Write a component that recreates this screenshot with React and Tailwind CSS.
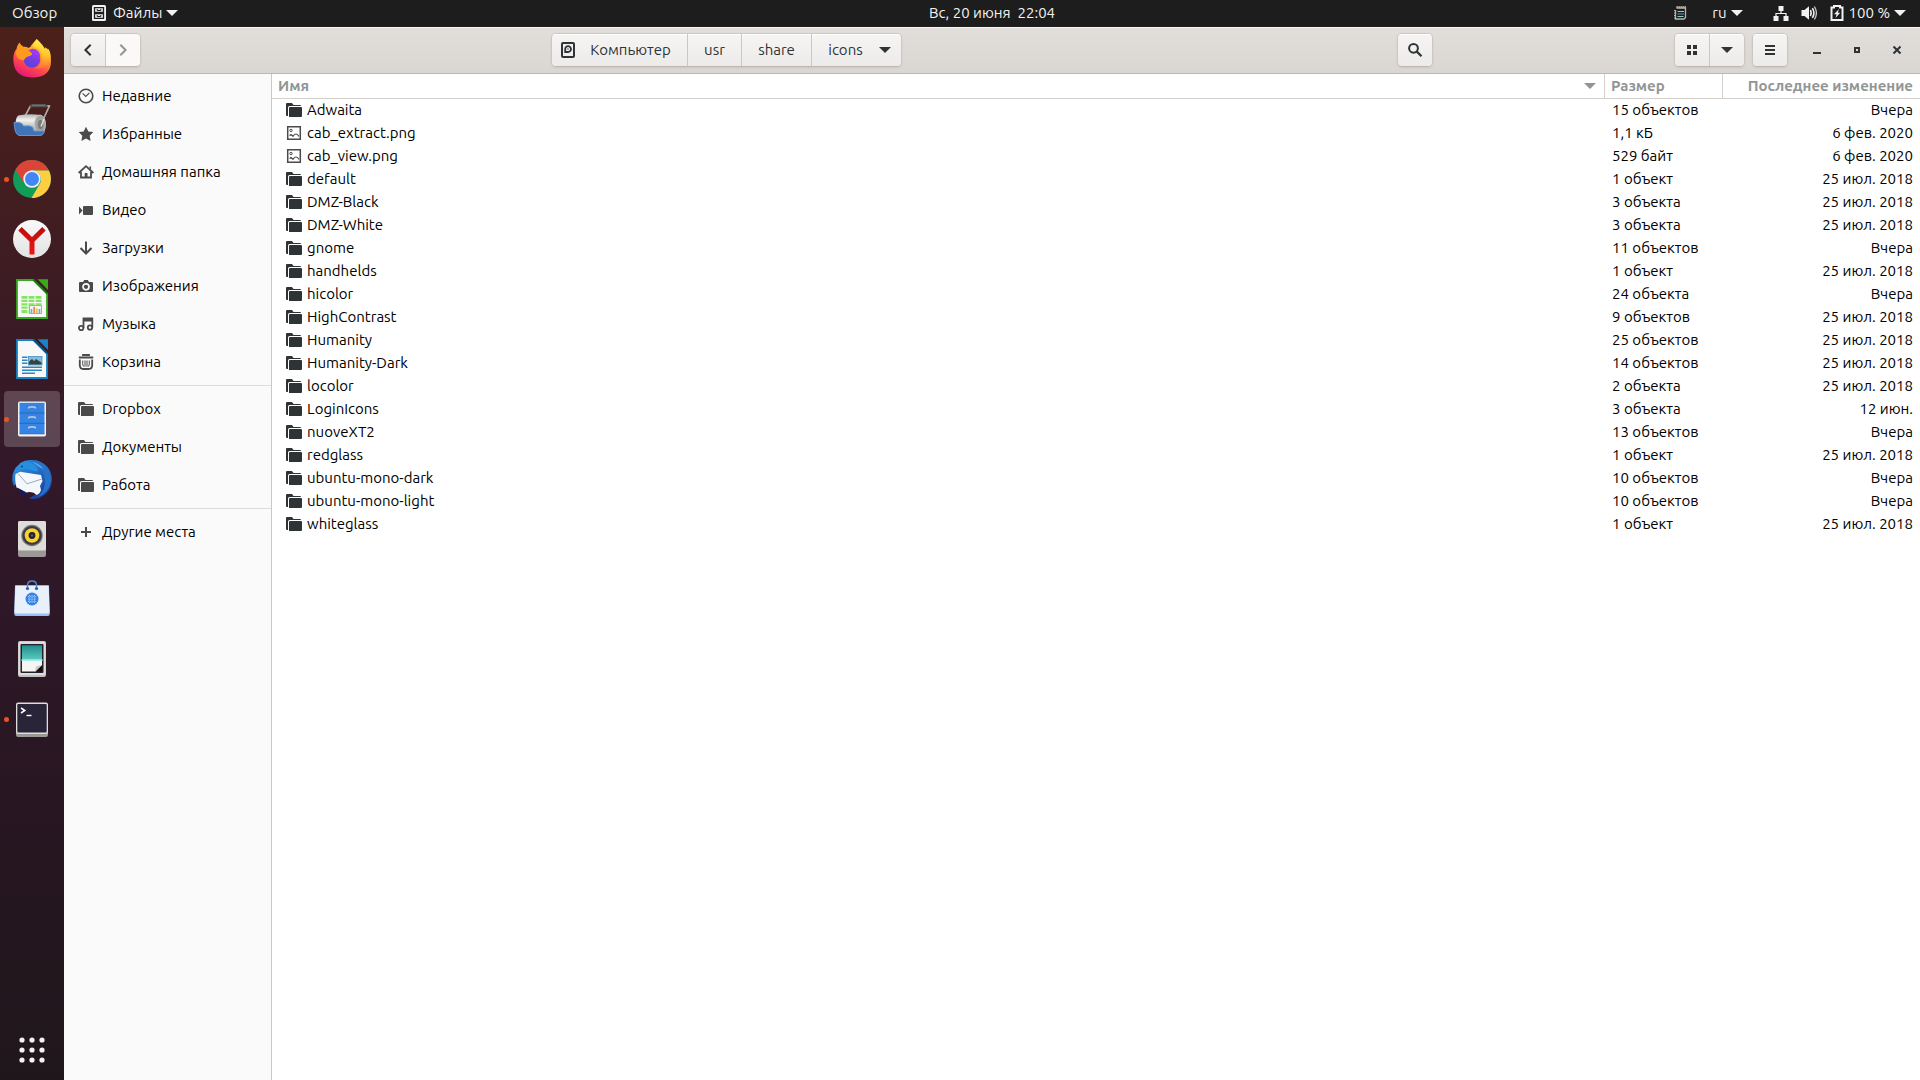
import React, { useState } from 'react';

const places = [
  [
    { label: 'Недавние', icon: 'recent' },
    { label: 'Избранные', icon: 'star' },
    { label: 'Домашняя папка', icon: 'home' },
    { label: 'Видео', icon: 'video' },
    { label: 'Загрузки', icon: 'download' },
    { label: 'Изображения', icon: 'camera' },
    { label: 'Музыка', icon: 'music' },
    { label: 'Корзина', icon: 'trash' },
  ],
  [
    { label: 'Dropbox', icon: 'folder' },
    { label: 'Документы', icon: 'folder' },
    { label: 'Работа', icon: 'folder' },
  ],
  [{ label: 'Другие места', icon: 'plus' }],
];

const files = [
  ['Adwaita', '15 объектов', 'Вчера'],
  ['cab_extract.png', '1,1 кБ', '6 фев. 2020'],
  ['cab_view.png', '529 байт', '6 фев. 2020'],
  ['default', '1 объект', '25 июл. 2018'],
  ['DMZ-Black', '3 объекта', '25 июл. 2018'],
  ['DMZ-White', '3 объекта', '25 июл. 2018'],
  ['gnome', '11 объектов', 'Вчера'],
  ['handhelds', '1 объект', '25 июл. 2018'],
  ['hicolor', '24 объекта', 'Вчера'],
  ['HighContrast', '9 объектов', '25 июл. 2018'],
  ['Humanity', '25 объектов', '25 июл. 2018'],
  ['Humanity-Dark', '14 объектов', '25 июл. 2018'],
  ['locolor', '2 объекта', '25 июл. 2018'],
  ['LoginIcons', '3 объекта', '12 июн.'],
  ['nuoveXT2', '13 объектов', 'Вчера'],
  ['redglass', '1 объект', '25 июл. 2018'],
  ['ubuntu-mono-dark', '10 объектов', 'Вчера'],
  ['ubuntu-mono-light', '10 объектов', 'Вчера'],
  ['whiteglass', '1 объект', '25 июл. 2018'],
];

// 16px symbolic icons
const glyphs = {
  recent: (
    <g fill="none" stroke="currentColor" strokeWidth="1.6">
      <circle cx="8" cy="8" r="6.8" />
      <path d="M4.6 5.4 7.8 8.4 11.4 4.8" strokeWidth="1.2" />
    </g>
  ),
  star: <path d="M8 .8 10.3 5.4 15.3 6.1 11.7 9.7 12.6 15 8 12.5 3.4 15 4.3 9.7.7 6.1 5.7 5.4Z" fill="currentColor" />,
  home: (
    <g>
      <path d="M.6 9 8 2.2 15.4 9M3 8v5.5h10V8" fill="none" stroke="currentColor" strokeWidth="1.8" />
      <path d="M6.7 14V9h2.8v5M11.5 2.5h1.6v3l-1.6-1.4z" fill="currentColor" />
    </g>
  ),
  video: (
    <g fill="currentColor">
      <rect x="5" y="4" width="10" height="9" rx="1" />
      <path d="M1 4.5 4.6 8.5 1 12.5Z" />
    </g>
  ),
  download: <path d="M8 1.5v12M2.5 8 8 13.5 13.5 8" fill="none" stroke="currentColor" strokeWidth="2" />,
  camera: (
    <g>
      <path d="M2 4h3l1.2-2h3.6L11 4h3a1 1 0 0 1 1 1v8a1 1 0 0 1-1 1H2a1 1 0 0 1-1-1V5a1 1 0 0 1 1-1Z" fill="currentColor" />
      <circle cx="8" cy="8.8" r="3" fill="none" stroke="#fafafa" strokeWidth="1.7" />
    </g>
  ),
  music: (
    <g fill="none" stroke="currentColor" strokeWidth="1.8">
      <circle cx="3.2" cy="12" r="2.2" />
      <circle cx="12" cy="11.5" r="2.2" />
      <path d="M5.5 12V2.5H14.3V11.5M5.5 4.5H14" />
    </g>
  ),
  trash: (
    <g fill="none" stroke="currentColor">
      <path d="M5 2V1h6v1M.8 3.5h14.4" strokeWidth="1.8" />
      <path d="M1.8 5.5v5.5q0 4 3.5 4h5.4q3.5 0 3.5-4V5.5" strokeWidth="1.8" />
      <path d="M4.8 6.5q-.6 3.5 .6 6M7 6.5v6.2M9 6.5v6.2M11.2 6.5q.6 3.5-.6 6" strokeWidth="1" />
    </g>
  ),
  folder: (
    <path
      d="M1 1h5l1.5 2H14q1 0 1 1H3.5Q2 4 2 5.5V14H1q-1 0-1-1V2q0-1 1-1ZM4 5h11q1 0 1 1v8q0 1-1 1H3V6q0-1 1-1Z"
      fill="currentColor"
    />
  ),
  image: (
    <g fill="none" stroke="currentColor">
      <path d="M1.7 1.7h12.6v12.6H1.7Z" strokeWidth="1.5" />
      <circle cx="5" cy="5.5" r="1.2" strokeWidth="1" />
      <path d="M3.5 10.5 5 9.5 7 11.3Q8.5 8.8 10 9T13 11.3" strokeWidth="1.2" />
    </g>
  ),
  plus: <path d="M8 3v10M3 8h10" stroke="currentColor" strokeWidth="2" fill="none" />,
  disk: (
    <g fill="none" stroke="currentColor">
      <rect x="2" y="1" width="12" height="14" rx="1" strokeWidth="2" />
      <path d="M5.2 11V7.2A2.9 2.9 0 1 1 8 10H5.6" strokeWidth="1.8" />
      <circle cx="8" cy="7" r=".7" fill="currentColor" strokeWidth="0" />
    </g>
  ),
  back: <path d="M10.7 2.7 5.4 8l5.3 5.3" fill="none" stroke="currentColor" strokeWidth="2" />,
  forward: <path d="M5.3 2.7 10.6 8l-5.3 5.3" fill="none" stroke="currentColor" strokeWidth="2" />,
  search: (
    <g fill="none" stroke="currentColor" strokeWidth="2">
      <circle cx="6.5" cy="6.3" r="4.4" />
      <path d="M9.6 9.4 14.5 14.3" strokeWidth="2.2" />
    </g>
  ),
  grid: <path d="M3 3h4v4H3zM9 3h4v4H9zM3 9h4v4H3zM9 9h4v4H9z" fill="currentColor" />,
  menu: <path d="M3 3h10v2H3zM3 7h10v2H3zM3 11h10v2H3z" fill="currentColor" />,
  minimize: <path d="M4 10h8v2H4z" fill="currentColor" />,
  maximize: <path d="M6 6h4v4H6z" fill="none" stroke="currentColor" strokeWidth="2" />,
  close: <path d="m4.5 4.5 7 7m0-7-7 7" fill="none" stroke="currentColor" strokeWidth="2" />,
  cabinet: (
    <g>
      <rect x="1" y="0" width="14" height="16" rx="1.5" fill="#f2f2f2" />
      <path d="M3.5 2.7h9v4.6h-9zM3.5 8.7h9v4.6h-9z" fill="none" stroke="#1d1d1d" strokeWidth="1.3" />
      <path d="M6.2 4v1.5h3.6V4M6.2 10v1.5h3.6V10" fill="none" stroke="#1d1d1d" strokeWidth="1" />
    </g>
  ),
  notes: (
    <g fill="none">
      <path d="M4.5 3h9v9.5L12 14H3.5V5" stroke="#b9b6a9" strokeWidth="1.3" />
      <path d="M4.5 2h9.5" stroke="#b9b6a9" strokeWidth="1.8" strokeDasharray="1.3 .7" />
      <path d="M2 5.5h2M2 8h2M2 10.5h2M2 13h2" stroke="#b9b6a9" />
      <path d="M5.5 6.5h6.5M5.5 11.5h6" stroke="#8fc9d4" strokeWidth="1" />
      <path d="M5.5 9h6.5" stroke="#3f8fa8" strokeWidth="1.2" />
    </g>
  ),
  network: (
    <g fill="currentColor">
      <path d="M5.5 1h5v5h-5zM.5 11h5v5h-5zM10.5 11h5v5h-5z" />
      <path d="M8 6v2.5M3 11V8.5h10V11" fill="none" stroke="currentColor" strokeWidth="1.2" />
    </g>
  ),
  volume: (
    <g fill="none" stroke="currentColor">
      <path d="M.5 5h3L8 1.2v13.6L3.5 11h-3Z" fill="currentColor" strokeWidth="0" />
      <path d="M9.4 5q1.6 3 0 6M11.4 3.2q3 4.8 0 9.6" strokeWidth="1.6" />
      <path d="M13.4 1.5q4 6.5 0 13" strokeWidth="1.3" opacity=".8" />
    </g>
  ),
  battery: (
    <g>
      <path d="M5 2.5V1h6v1.5H13.5V15H2.5V2.5Z" fill="none" stroke="currentColor" strokeWidth="2" />
      <path d="M10 4 5 9.2h2.6L6.5 13l4.7-5.2H8.8Z" fill="currentColor" />
    </g>
  ),
};

const Icon = ({ name, className = '' }) => (
  <svg viewBox="0 0 16 16" className={`h-4 w-4 shrink-0 ${className}`} aria-hidden="true">
    {glyphs[name]}
  </svg>
);

const Arrow = ({ className = '' }) => (
  <svg viewBox="0 0 12 6" className={`h-[6px] w-3 shrink-0 ${className}`} aria-hidden="true">
    <path d="M0 0h12L6 6Z" fill="currentColor" />
  </svg>
);

const Firefox = () => (
  <g>
    <path
      d="M11.4 7.5Q12.8 10.5 15.5 11.8 18.5 11.5 20.5 13 23 12 23.5 10 25.5 7.5 28.8 4 31 6.5 32.5 9 34.5 10.5 36 13.5 37 14.5 37.5 12.3 40.5 14 42.2 18 43 22 43 26 43 42.5 24 42.5 5.3 42 5.3 24 5.5 17 8.5 14 9 10.5 11.4 7.5Z"
      fill="url(#ff-body)"
    />
    <path d="M28.8 4.3Q25 8.5 25.5 12 33 12 34 21 34.5 30 27 33.5 38 34 41.5 26 43.5 19 40.5 14L38 16Q35 9.5 28.8 4.3Z" fill="url(#ff-flame)" />
    <circle cx="24" cy="24.5" r="8.2" fill="url(#ff-globe)" />
    <path d="M11.5 9Q12.5 12 15.5 12.5 19 12 21 14.5L24 18.5Q24.5 20.5 20.5 21.3 17.5 22 16 25 9.5 25.5 8 19 8.5 13 11.5 9Z" fill="#ff9a1c" />
    <path d="M20.5 15.5Q25 12 30 16 33.5 20 31.5 25.5 30 20 26.5 19.5Z" fill="#9a3df0" />
  </g>
);

const Roller = () => (
  <g transform="translate(0 6)">
    <path d="M16.5 16 22.5 4.8H41.5L33.5 22" fill="none" stroke="#a9aba7" strokeWidth="1.7" strokeLinejoin="round" />
    <path d="M23.5 4.8H38" stroke="#525451" strokeWidth="3" strokeLinecap="round" />
    <path d="M24 4.2H37" stroke="#8b8d8a" strokeWidth=".8" />
    <path d="M10 14.5Q22 12.5 32 14V32Q20 34 8 30 6.5 18 10 14.5Z" fill="url(#roll)" />
    <ellipse cx="32" cy="23.5" rx="5.5" ry="9.5" fill="#a2a4a0" stroke="#d2d3d0" strokeWidth=".8" />
    <ellipse cx="32.5" cy="23.5" rx="2.6" ry="4.5" fill="#777a76" />
    <path d="M6 21.5Q10.5 20.5 14 22.5L15.5 25Q22 24.2 24.5 26L26 30H36.5Q36 33.5 33 34.5H11Q8 33.5 7 29Z" fill="#3f74b8" stroke="#6b9bd2" strokeWidth=".9" />
    <path d="M36 18 33 25.5" stroke="#e6e7e4" strokeWidth="1.3" />
  </g>
);

const Chrome = () => (
  <g>
    <circle cx="24" cy="24" r="19" fill="#109d58" />
    <path d="M7.5 14.5A19 19 0 0 1 40.9 15.5H24L16 28.5Z" fill="#db4437" />
    <path d="M40.9 15.5A19 19 0 0 1 23.5 43L32 28.6A9 9 0 0 0 24 15.5Z" fill="#ffcd40" />
    <circle cx="24" cy="24" r="8.7" fill="#f1f1f1" />
    <circle cx="24" cy="24" r="7" fill="#4285f4" />
  </g>
);

const Yandex = () => (
  <g>
    <circle cx="24" cy="24" r="19" fill="url(#silver)" />
    <path d="M12 13.8 24 25.5 36 13.8M24 25V39.5" fill="none" stroke="url(#ya)" strokeWidth="5" />
  </g>
);

const Sheet = ({ color, dark, children }) => (
  <g>
    <path d="M9 5H25.5L39 18.5V43H9Z" fill="#f8f8f8" stroke={color} strokeWidth="1.8" />
    <path d="M29.5 4.2H40V15Z" fill={color} />
    <path d="M25 4.5 39.5 19" stroke={dark} strokeWidth="1.5" />
    {children}
  </g>
);

const Calc = () => (
  <Sheet color="#37ab1c" dark="#18770a">
    <rect x="13.5" y="21" width="20" height="17" fill="#89e06a" />
    <path d="M13.5 24.3h20M13.5 27.6h20M13.5 31h20M13.5 34.4h20M20 21v17M27 21v17" stroke="#f4fff0" strokeWidth="1.1" />
    <rect x="21.5" y="30.5" width="12" height="8" fill="#f5f5f2" stroke="#a5a5a0" strokeWidth=".9" />
    <path d="M23.5 34v4M31.5 34v4" stroke="#57b6c5" strokeWidth="1.6" />
    <path d="M26.2 31.8v6.2" stroke="#ef8354" strokeWidth="1.8" />
    <path d="M28.9 33.5v4.5" stroke="#eabd3e" strokeWidth="1.6" />
  </Sheet>
);

const Writer = () => (
  <Sheet color="#1683c7" dark="#0b4f83">
    <path d="M14 22.3h5.5M14 25.3h5.5M14 28.3h5.5M14 32.3h20M14 35.3h20M14 38.3h13" stroke="#2a88c4" strokeWidth="1.4" />
    <rect x="20.5" y="21.5" width="13.5" height="8.5" fill="#83bce3" stroke="#3489bd" strokeWidth=".7" />
    <path d="M21 29.6V27Q24 21.8 26 26.3L28 24Q30.5 25.5 33.5 27.5V29.6Z" fill="#36443a" />
  </Sheet>
);

const Cabinet = () => (
  <g>
    <rect x="10" y="6.5" width="28" height="35" rx="1.8" fill="#f3f2f1" />
    <path d="M11.5 7.8h25v31h-25Z" fill="#3584e4" />
    <path d="M11.5 18h25M11.5 28.3h25M11.5 38.8h25" stroke="#1f66bd" strokeWidth=".9" />
    <path
      d="M20.5 13.5q0-1.5 1.5-1.5h4q1.5 0 1.5 1.5M20.5 23.5q0-1.5 1.5-1.5h4q1.5 0 1.5 1.5M20.5 33.5q0-1.5 1.5-1.5h4q1.5 0 1.5 1.5"
      fill="none"
      stroke="#c9cfd6"
      strokeWidth="1.5"
    />
  </g>
);

const Thunderbird = () => (
  <g>
    <path d="M12 8Q19 3.5 28 5.5 43 9.5 44 24 44 37.5 31 43 26 44.5 21 43.5 30 39 31 34L8 29 6 31Q3 25 5 18L10 12Z" fill="url(#tb)" />
    <path d="M7.5 19 12 16.8 33 20 34.5 26 32 31 33 35Q32 39 28.5 40 25 36 18 37.5L8.5 32.5Q6.5 25 7.5 19Z" fill="#f4f8fc" />
    <path d="M10 18.5 19 28.8 34 24" fill="none" stroke="#9cabb9" strokeWidth="1" />
    <path d="M5.5 17Q9 7 19 7.5 28 8 30.5 16 26 17 21 14.5 15 12 10 17Z" fill="#278fe0" />
    <path d="M21 6Q36 10 37 25 38 34 30 42 41 38 43 26 43 10 29 5.5Z" fill="#2672c7" />
    <path d="M24 6.5Q33 9 35 14 29 11 24 6.5Z" fill="#4fa9ea" />
    <path d="M9 32.5Q12 39 18 42.5L17.5 37Z" fill="#161a5c" />
    <circle cx="14" cy="11.5" r=".9" fill="#0c3566" />
  </g>
);

const Speaker = () => (
  <g>
    <rect x="10" y="6" width="28" height="36" rx="2" fill="#9a9996" />
    <rect x="10" y="6" width="28" height="29.5" rx="1.5" fill="#deddda" />
    <circle cx="24" cy="20.5" r="10.7" fill="#77767b" />
    <circle cx="24" cy="20.5" r="9.6" fill="#3d3846" />
    <circle cx="24" cy="20.5" r="7.3" fill="#f6d32d" />
    <circle cx="24" cy="20.5" r="3.4" fill="#241f31" />
    <circle cx="24" cy="20.5" r="1.2" fill="#5e5c64" />
  </g>
);

const Shop = () => (
  <g>
    <path d="M7 10.5h34l.8 28.5q0 2-2 2H8.2q-2 0-2-2Z" fill="#99c1f1" />
    <path d="M7.4 10.5h33.2l1 26.5q0 1.5-2 1.5H8.4q-2 0-2-1.5Z" fill="#e8f0fc" />
    <circle cx="24" cy="24" r="6.5" fill="#3584e4" />
    <path d="M21.5 20v8M24 20v8M26.5 20v8M20 21.5h8M20 24h8M20 26.5h8" stroke="#d6e6fb" strokeWidth=".7" strokeDasharray="1 .8" />
    <path d="M19.5 12.5V10.5q0-4.5 4.5-4.5t4.5 4.5v2" fill="none" stroke="#478cd9" strokeWidth="1.5" />
    <circle cx="19.5" cy="13.5" r="1.6" fill="#1a5fb4" />
    <circle cx="28.5" cy="13.5" r="1.6" fill="#1a5fb4" />
  </g>
);

const Scanner = () => (
  <g>
    <rect x="10" y="6" width="28" height="36" rx="2" fill="#c0bfbc" />
    <rect x="10.5" y="6.5" width="27" height="33.5" rx="1.5" fill="#deddda" />
    <rect x="12.5" y="9" width="23" height="29" rx="1" fill="#241f31" />
    <path d="M14 10.3h20v14.7h-20Z" fill="url(#scan)" />
    <path d="M14 25h20v6L28 36.5H14Z" fill="#f6f5f4" />
    <path d="M34 30 27.5 36.5H34Z" fill="#0c0c0c" />
    <path d="M27 36.5 28 31.5 34 30Z" fill="#c9c8c4" />
    <path d="M13.5 25h21" stroke="#8ff0e4" strokeWidth="1.7" />
  </g>
);

const Terminal = () => (
  <g>
    <rect x="8" y="9" width="32" height="33" rx="2" fill="#9a9996" />
    <rect x="8" y="7.5" width="32" height="31.5" rx="2" fill="#deddda" />
    <rect x="9.3" y="9" width="29.4" height="28.5" rx="1" fill="#2a2438" />
    <path d="M13 13 16.8 15.5 13 18" fill="none" stroke="#fff" strokeWidth="1.5" />
    <path d="M18.5 20.5h5" stroke="#fff" strokeWidth="1.4" />
  </g>
);

const dock = [
  { name: 'Firefox', art: Firefox },
  { name: 'Очистка', art: Roller },
  { name: 'Chrome', art: Chrome, running: true },
  { name: 'Яндекс.Браузер', art: Yandex },
  { name: 'LibreOffice Calc', art: Calc },
  { name: 'LibreOffice Writer', art: Writer },
  { name: 'Файлы', art: Cabinet, running: true, active: true },
  { name: 'Thunderbird', art: Thunderbird },
  { name: 'Rhythmbox', art: Speaker },
  { name: 'Ubuntu Software', art: Shop },
  { name: 'Сканирование', art: Scanner },
  { name: 'Терминал', art: Terminal, running: true },
];

const Gradients = () => (
  <svg className="absolute h-0 w-0" aria-hidden="true">
    <defs>
      <linearGradient id="ff-body" x1=".8" y1="0" x2=".3" y2="1">
        <stop offset="0" stopColor="#fff04a" />
        <stop offset=".4" stopColor="#ff9a24" />
        <stop offset=".7" stopColor="#ff4550" />
        <stop offset="1" stopColor="#e31577" />
      </linearGradient>
      <linearGradient id="ff-flame" x1=".4" y1="0" x2=".3" y2="1">
        <stop offset="0" stopColor="#fff24b" />
        <stop offset=".5" stopColor="#ffc52d" />
        <stop offset="1" stopColor="#ff6a3d" />
      </linearGradient>
      <linearGradient id="ff-globe" x1=".8" y1="0" x2=".3" y2="1">
        <stop offset="0" stopColor="#a034f0" />
        <stop offset="1" stopColor="#5145d8" />
      </linearGradient>
      <linearGradient id="roll" x1="0" y1="0" x2="0" y2="1">
        <stop offset="0" stopColor="#b5b6b2" />
        <stop offset=".3" stopColor="#f2f2f0" />
        <stop offset="1" stopColor="#868883" />
      </linearGradient>
      <linearGradient id="silver" x1="0" y1="0" x2="0" y2="1">
        <stop offset="0" stopColor="#fafafa" />
        <stop offset="1" stopColor="#e2e2e2" />
      </linearGradient>
      <linearGradient id="ya" gradientUnits="userSpaceOnUse" x1="0" y1="12" x2="0" y2="40">
        <stop offset="0" stopColor="#b90f0f" />
        <stop offset="1" stopColor="#f01414" />
      </linearGradient>
      <linearGradient id="tb" x1="0" y1="0" x2=".6" y2="1">
        <stop offset="0" stopColor="#2f9ae8" />
        <stop offset="1" stopColor="#1c3fa0" />
      </linearGradient>
      <linearGradient id="scan" x1="0" y1="0" x2="0" y2="1">
        <stop offset="0" stopColor="#1f8f8c" />
        <stop offset="1" stopColor="#5fc9c0" />
      </linearGradient>
    </defs>
  </svg>
);

const buttonFace =
  'flex h-full items-center justify-center bg-linear-to-b from-[#f6f5f4] to-[#edebe9] text-[#2e3436] shadow-[inset_0_1px_#fff]';
const buttonGroup =
  'flex h-[34px] divide-x divide-[#cdc7c2] overflow-hidden rounded-[5px] border border-[#cdc7c2] border-b-[#bfb8b1] shadow-[0_1px_2px_rgba(0,0,0,0.08)]';

const TopBar = () => (
  <header className="flex h-[27px] shrink-0 items-center bg-[#1d1d1d] pb-px text-[15px] leading-5 text-[#f2f2f2]">
    <button className="w-16 shrink-0 pl-3 text-left">Обзор</button>
    <div className="grid flex-1 grid-cols-[1fr_auto_1fr] items-center">
      <button className="flex items-center justify-self-start pl-[27px]">
        <Icon name="cabinet" />
        <span className="ml-[6px] mr-1">Файлы</span>
        <Arrow />
      </button>
      <button className="whitespace-pre">Вс, 20 июня{'  '}22:04</button>
      <div className="flex items-center justify-end pr-[14px]">
        <Icon name="notes" className="mr-6" />
        <button className="mr-[30px] flex items-center gap-1">
          ru <Arrow />
        </button>
        <button className="flex items-center">
          <Icon name="network" />
          <Icon name="volume" className="ml-3" />
          <Icon name="battery" className="ml-3" />
          <span className="mx-1">100 %</span>
          <Arrow />
        </button>
      </div>
    </div>
  </header>
);

const Dock = () => (
  <nav
    aria-label="Избранные приложения"
    className="flex w-16 shrink-0 flex-col items-center gap-1 bg-linear-to-b from-[#4c2019] via-[#311729] via-45% to-[#1f161b] pt-1 pb-[2px]"
  >
    {dock.map(({ name, art: Art, running, active }) => (
      <button
        key={name}
        aria-label={name}
        className={`relative flex h-14 w-14 shrink-0 items-center justify-center rounded ${active ? 'bg-white/20' : ''}`}
      >
        {running && <span className="absolute left-0 top-[26px] h-[5px] w-[5px] rounded-full bg-[#e95420]" />}
        <svg viewBox="0 0 48 48" className="h-12 w-12">
          <Art />
        </svg>
      </button>
    ))}
    <button aria-label="Показать приложения" className="mt-auto flex h-14 w-14 items-center justify-center">
      <svg viewBox="0 0 48 48" className="h-12 w-12" fill="#f2f2f2">
        {[14, 24, 34].map((y) => [14, 24, 34].map((x) => <circle key={`${x}-${y}`} cx={x} cy={y} r="2.6" />))}
      </svg>
    </button>
  </nav>
);

const HeaderBar = () => (
  <div className="flex h-[47px] shrink-0 items-center border-b border-[#bfb8b1] bg-linear-to-b from-[#e1dedb] to-[#dad6d2] px-[6px] shadow-[inset_0_1px_#f9f8f8]">
    <div className="flex flex-1">
      <div className={buttonGroup}>
        <button aria-label="Назад" className={`${buttonFace} w-[35px]`}>
          <Icon name="back" />
        </button>
        <button aria-label="Вперёд" disabled className="flex w-[34px] items-center justify-center bg-[#faf9f8] text-[#929595]">
          <Icon name="forward" />
        </button>
      </div>
    </div>
    <div className="flex w-full max-w-[882px] items-center justify-between text-[15px] leading-5">
      <div className={buttonGroup}>
        <button className={`${buttonFace} w-[136px] gap-[14px] pr-2`}>
          <Icon name="disk" />
          Компьютер
        </button>
        <button className={`${buttonFace} w-[54px]`}>usr</button>
        <button className={`${buttonFace} w-[70px]`}>share</button>
        <button className={`${buttonFace} w-[89px] gap-4 pl-[6px]`}>
          icons <Arrow />
        </button>
      </div>
      <div className={buttonGroup}>
        <button aria-label="Поиск" className={`${buttonFace} w-[34px]`}>
          <Icon name="search" />
        </button>
      </div>
    </div>
    <div className="flex flex-1 items-center justify-end text-[#2e3436]">
      <div className={buttonGroup}>
        <button aria-label="Вид значками" className={`${buttonFace} w-[35px]`}>
          <Icon name="grid" />
        </button>
        <button aria-label="Параметры вида" className={`${buttonFace} w-[34px]`}>
          <Arrow />
        </button>
      </div>
      <div className={`${buttonGroup} mx-[7px]`}>
        <button aria-label="Меню" className={`${buttonFace} w-[34px]`}>
          <Icon name="menu" />
        </button>
      </div>
      <div className="flex gap-6 pl-[14px] pr-[9px]">
        <button aria-label="Свернуть">
          <Icon name="minimize" />
        </button>
        <button aria-label="Развернуть">
          <Icon name="maximize" />
        </button>
        <button aria-label="Закрыть">
          <Icon name="close" />
        </button>
      </div>
    </div>
  </div>
);

const Sidebar = () => (
  <aside className="w-52 shrink-0 border-r border-[#cdc7c2] bg-[#fafafa] pt-[3px]">
    {places.map((group, i) => (
      <ul key={i} className={i > 0 ? 'mt-1 border-t border-[#dcdcdc] pt-1' : ''}>
        {group.map(({ label, icon }) => (
          <li key={label}>
            <a href="#" className="flex h-[38px] items-center gap-2 pl-[14px] text-[15px] leading-5 text-black">
              <Icon name={icon} className="text-[#4a4a4a]" />
              {label}
            </a>
          </li>
        ))}
      </ul>
    ))}
  </aside>
);

const FileTable = () => {
  const [selected, setSelected] = useState(null);

  return (
    <table className="w-full border-separate border-spacing-0 text-[15px] leading-[22px] text-black">
      <thead>
        <tr className="h-[25px] text-[#929595]">
          <th className="border-b border-[#d5d0cc] p-0 pl-[6px]">
            <button className="flex w-full items-center justify-between pr-2 font-bold">
              Имя <Arrow />
            </button>
          </th>
          <th className="w-[118px] border-b border-l border-[#d5d0cc] p-0 pl-[6px] text-left">
            <button className="font-bold">Размер</button>
          </th>
          <th className="w-[198px] border-b border-l border-[#d5d0cc] p-0 pr-[7px] text-right">
            <button className="font-bold">Последнее изменение</button>
          </th>
        </tr>
      </thead>
      <tbody className="align-top">
        {files.map(([name, size, modified]) => (
          <tr key={name} onClick={() => setSelected(name)} className={`h-[23px] ${selected === name ? 'bg-[#e95420] text-white' : ''}`}>
            <td className="p-0 pl-[14px]">
              <div className="flex items-center gap-[5px]">
                {name.endsWith('.png') ? (
                  <Icon name="image" className="text-[#4a4a4a]" />
                ) : (
                  <Icon name="folder" className="text-[#2e3436]" />
                )}
                {name}
              </div>
            </td>
            <td className="p-0 pl-2">{size}</td>
            <td className="p-0 pr-[7px] text-right">{modified}</td>
          </tr>
        ))}
      </tbody>
    </table>
  );
};

export default function App() {
  return (
    <div className="flex min-h-screen flex-col bg-white font-['Ubuntu','Noto_Sans',sans-serif]">
      <Gradients />
      <TopBar />
      <div className="flex flex-1">
        <Dock />
        <div className="flex min-w-0 flex-1 flex-col">
          <HeaderBar />
          <div className="flex flex-1">
            <Sidebar />
            <main className="min-w-0 flex-1 bg-white">
              <FileTable />
            </main>
          </div>
        </div>
      </div>
    </div>
  );
}
